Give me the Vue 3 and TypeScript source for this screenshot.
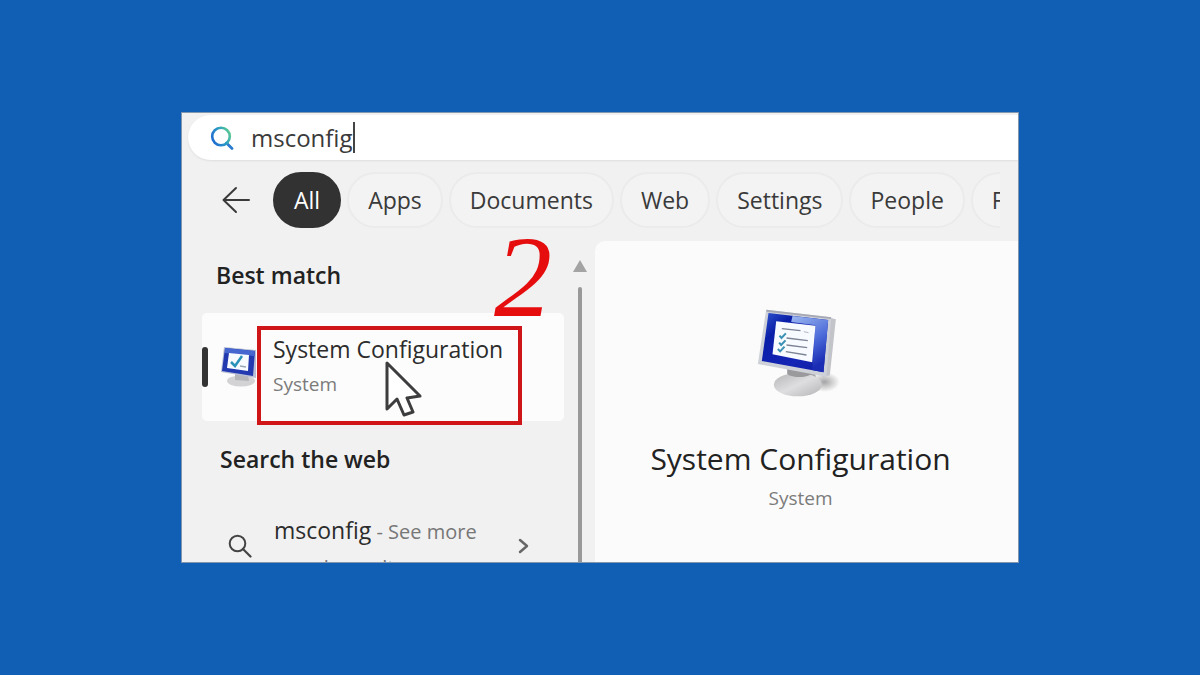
<script setup lang="ts">
import { ref } from 'vue'

const query = ref('msconfig')
const active = ref('All')
const filters: string[] = ['All', 'Apps', 'Documents', 'Web', 'Settings', 'People', 'Folders']
</script>

<template>
  <main class="stage">
    <section class="window">
      <label class="search">
        <svg class="search-icon" viewBox="0 0 24 24" aria-hidden="true">
          <defs>
            <linearGradient id="lens" x1="0" y1="0.6" x2="1" y2="0.1">
              <stop offset="0" stop-color="#1f6fd0" />
              <stop offset="0.5" stop-color="#2a9cc4" />
              <stop offset="1" stop-color="#5fd08a" />
            </linearGradient>
          </defs>
          <path d="M16.500 17L22 22.500" stroke="#2b7bd0" stroke-width="2.800" stroke-linecap="round" />
          <circle cx="11" cy="10.500" r="8.800" fill="none" stroke="url(#lens)" stroke-width="2.600" />
        </svg>
        <input v-model="query" class="query" type="text" aria-label="Search" spellcheck="false" />
        <span class="caret"></span>
      </label>

      <nav class="filters">
        <button class="back" type="button" aria-label="Back">
          <svg viewBox="0 0 28 28" aria-hidden="true">
            <path d="M27 14H1.500M14 2L1.500 14L14 26" fill="none" stroke="#3a3a3a" stroke-width="2" stroke-linecap="round" stroke-linejoin="round" />
          </svg>
        </button>
        <div class="chips">
          <button
            v-for="f in filters"
            :key="f"
            type="button"
            class="chip"
            :class="{ selected: f === active }"
            @click="active = f"
          >{{ f }}</button>
        </div>
      </nav>

      <div class="body">
        <div class="results">
          <h2 class="heading">Best match</h2>
          <button class="match" type="button">
            <span class="accent"></span>
            <svg class="match-icon" viewBox="0 0 36 42" aria-hidden="true">
              <ellipse cx="20" cy="35" rx="14" ry="5.500" fill="#d3d3d5" />
              <path d="M14 28L27 29L28 35L14 34Z" fill="#b5b6ba" />
              <path d="M3 1L35 4V32L0 26Z" fill="#b8bfd6" />
              <path d="M4 2L34 5L32 30L1 25Z" fill="#2339b0" />
              <path d="M4 2L34 5L33 10L4 7Z" fill="#4767d0" />
              <path d="M8 7L28 9L27 25L6 22Z" fill="#f8fbff" />
              <path d="M10 16L14 20L21 10" fill="none" stroke="#2b93b8" stroke-width="2.500" />
              <path d="M19 20L25 21" stroke="#9aa5b5" stroke-width="1.500" />
            </svg>
            <span class="match-text">
              <span class="name">System Configuration</span>
              <span class="kind">System</span>
            </span>
            <span class="highlight"></span>
            <span class="step">2</span>
            <svg class="pointer" viewBox="0 0 38 57" aria-hidden="true">
              <path d="M2 2V48L12 38L19 54L28 51L22 37L35 35Z" fill="#fff" stroke="#3d3d3f" stroke-width="3" stroke-linejoin="round" />
            </svg>
          </button>

          <h2 class="heading web-heading">Search the web</h2>
          <a class="web" href="#">
            <svg class="web-icon" viewBox="0 0 24 24" aria-hidden="true">
              <circle cx="9.500" cy="9.500" r="7.800" fill="none" stroke="#444" stroke-width="2" />
              <path d="M15 15L22.500 22.500" stroke="#444" stroke-width="2.200" stroke-linecap="round" />
            </svg>
            <span class="web-text">
              <span><span class="name">msconfig</span> - See more</span>
              <span>search results</span>
            </span>
            <svg class="chevron" viewBox="0 0 12 16" aria-hidden="true">
              <path d="M2 2L9 8L2 14" fill="none" stroke="#666" stroke-width="2.500" stroke-linecap="round" stroke-linejoin="round" />
            </svg>
          </a>
        </div>

        <div class="scroll" aria-hidden="true">
          <span class="up"></span>
          <span class="thumb"></span>
        </div>

        <section class="detail">
          <svg class="detail-icon" viewBox="45 35 255 270" aria-hidden="true">
            <defs>
              <linearGradient id="screen" x1="0" y1="0" x2="1" y2="1">
                <stop offset="0" stop-color="#3257d0" />
                <stop offset="0.250" stop-color="#0a1fa8" />
                <stop offset="0.650" stop-color="#1525b5" />
                <stop offset="1" stop-color="#1120a0" />
              </linearGradient>
              <linearGradient id="glow" x1="0" y1="0" x2="0.400" y2="1">
                <stop offset="0" stop-color="#9db8f0" />
                <stop offset="0.600" stop-color="#4a69d8" />
                <stop offset="1" stop-color="#1a2cb4" />
              </linearGradient>
              <linearGradient id="base" x1="0" y1="0" x2="1" y2="1">
                <stop offset="0" stop-color="#b5b5b7" />
                <stop offset="0.500" stop-color="#dedee0" />
                <stop offset="1" stop-color="#b4b4b6" />
              </linearGradient>
              <radialGradient id="shade">
                <stop offset="0" stop-color="#a4a4a6" />
                <stop offset="1" stop-color="#a4a4a6" stop-opacity="0" />
              </radialGradient>
            </defs>
            <ellipse cx="252" cy="260" rx="46" ry="30" fill="url(#shade)" />
            <path d="M145 220L224 232L228 262L148 252Z" fill="#a8a8ab" />
            <ellipse cx="172" cy="268" rx="72" ry="35" fill="url(#base)" />
            <path d="M140 220L216 231C212 247 160 251 140 236Z" fill="#9a9a9d" />
            <path d="M262 66L286 72L268 240L246 246Z" fill="#c3c4c9" />
            <path d="M77 43L272 66L258 244L52 206Z" fill="#cfd1d9" />
            <path d="M77 43L272 66L271 71L78 49Z" fill="#a6a9b4" />
            <path d="M84 53L263 74L249 231L64 197Z" fill="url(#screen)" />
            <path d="M156 62L263 74L249 231L215 224L225 90L152 80Z" fill="url(#glow)" />
            <path d="M107 78L225 91L215 201L96 177Z" fill="#f7faff" />
            <path d="M124 100L180 106M138 128L202 136M138 149L200 157M136 169L198 179" stroke="#7c8394" stroke-width="4" />
            <path d="M190 109L204 112" stroke="#b3b8c4" stroke-width="3" />
            <path d="M117 121L123 128L136 114M116 142L122 149L135 135M112 161L119 168L132 154" fill="none" stroke="#3a91b4" stroke-width="6" />
          </svg>
          <h1 class="title">System Configuration</h1>
          <p class="kind">System</p>
        </section>
      </div>
    </section>
  </main>
</template>

<style>
body {
  background: #105fb5;
}
</style>

<style scoped>
* {
  box-sizing: border-box;
}

.stage {
  display: flex;
  height: 100vh;
  padding: 112px 181px;
  background: #105fb5;
  font-family: 'Open Sans', 'Noto Sans', sans-serif;
  color: #222;
}

.window {
  flex: 1;
  display: flex;
  flex-direction: column;
  min-width: 0;
  padding-top: 2px;
  overflow: hidden;
  background: #f1f1f1;
  border: 1px solid #8296b0;
}

button {
  font: inherit;
  color: inherit;
  border: 0;
  padding: 0;
  background: none;
  text-align: left;
}

.search {
  display: flex;
  flex: none;
  align-items: center;
  height: 45px;
  margin-left: 6px;
  padding-left: 22px;
  background: #fff;
  border-radius: 23px 0 0 23px;
  box-shadow: 0 1px 2px #dedede;
}

.search-icon {
  width: 24px;
  height: 24px;
  margin-right: 17px;
}

.query {
  width: 102px;
  height: 36px;
  padding: 0;
  border: 0;
  outline: 0;
  background: none;
  font: 24px 'Open Sans', 'Noto Sans', sans-serif;
  color: #3a3a3a;
}

.caret {
  width: 2px;
  height: 31px;
  background: #444;
}

.filters {
  display: flex;
  flex: none;
  align-items: center;
  margin-top: 12px;
  padding: 0 18px 0 40px;
}

.back {
  width: 28px;
  height: 28px;
  margin-right: 23px;
}

.back svg {
  display: block;
}

.chips {
  display: flex;
  flex: 1;
  gap: 6px;
  min-width: 0;
  overflow: hidden;
}

.chip {
  flex: none;
  height: 56px;
  padding: 0 19px;
  border: 2px solid #ebebeb;
  border-radius: 28px;
  background: #f3f3f3;
  font-size: 23px;
  color: #3a3a3a;
}

.chip.selected {
  background: #323232;
  border-color: #323232;
  color: #fff;
}

.body {
  display: grid;
  flex: 1;
  grid-template-columns: 382px 31px 1fr;
  min-height: 0;
  margin-top: 13px;
}

.results {
  padding-left: 20px;
  min-height: 0;
}

.heading {
  margin: 0;
  padding: 18px 0 0 14px;
  font-size: 23px;
  font-weight: 600;
  line-height: 32px;
}

.web-heading {
  padding: 22px 0 0 18px;
}

.match {
  position: relative;
  display: flex;
  align-items: center;
  width: 100%;
  height: 108px;
  margin-top: 22px;
  background: #fcfcfc;
  border-radius: 5px;
}

.accent {
  width: 6px;
  height: 40px;
  border-radius: 3px;
  background: #333;
}

.match-icon {
  width: 36px;
  height: 42px;
  margin-left: 13px;
}

.match-text {
  display: flex;
  flex-direction: column;
  margin-left: 16px;
  padding-bottom: 2px;
}

.name {
  font-size: 23px;
  line-height: 36px;
  color: #2c2c2c;
}

.kind {
  margin: 0;
  font-size: 19px;
  line-height: 34px;
  color: #7b7b7b;
}

.highlight {
  position: absolute;
  left: 55px;
  top: 13px;
  width: 265px;
  height: 99px;
  border: 4px solid #d01519;
}

.step {
  position: absolute;
  left: 292px;
  top: -100px;
  font: italic 116px/128px 'Liberation Serif', serif;
  color: #e60d0f;
}

.pointer {
  position: absolute;
  left: 183px;
  top: 48px;
  width: 38px;
  height: 57px;
}

.web {
  display: grid;
  grid-template-columns: 24px 1fr 12px;
  align-items: start;
  margin-top: 37px;
  padding: 0 34px 0 26px;
  color: #777;
  text-decoration: none;
}

.web-icon {
  width: 24px;
  height: 24px;
  margin-top: 22px;
}

.web-text {
  display: flex;
  flex-direction: column;
  gap: 4px;
  margin-left: 22px;
  font-size: 20px;
  line-height: 32px;
  white-space: nowrap;
}

.chevron {
  width: 12px;
  height: 16px;
  margin-top: 26px;
}

.scroll {
  display: flex;
  flex-direction: column;
  align-items: center;
  padding: 19px 0 0 1px;
}

.up {
  border: 7px solid transparent;
  border-top: 0;
  border-bottom: 12px solid #a3a3a3;
}

.thumb {
  flex: 1;
  width: 4px;
  margin-top: 15px;
  background: #999;
  border-radius: 2px 2px 0 0;
}

.detail {
  display: flex;
  flex-direction: column;
  align-items: center;
  padding: 66px 12px 0 0;
  background: #fbfbfb;
  border-radius: 10px 0 0 0;
}

.detail-icon {
  width: 90px;
  height: 90px;
  margin-right: 6px;
}

.title {
  margin: 41px 0 0;
  font-size: 30px;
  font-weight: 400;
  line-height: 42px;
}

.detail .kind {
  line-height: 36px;
}
</style>
